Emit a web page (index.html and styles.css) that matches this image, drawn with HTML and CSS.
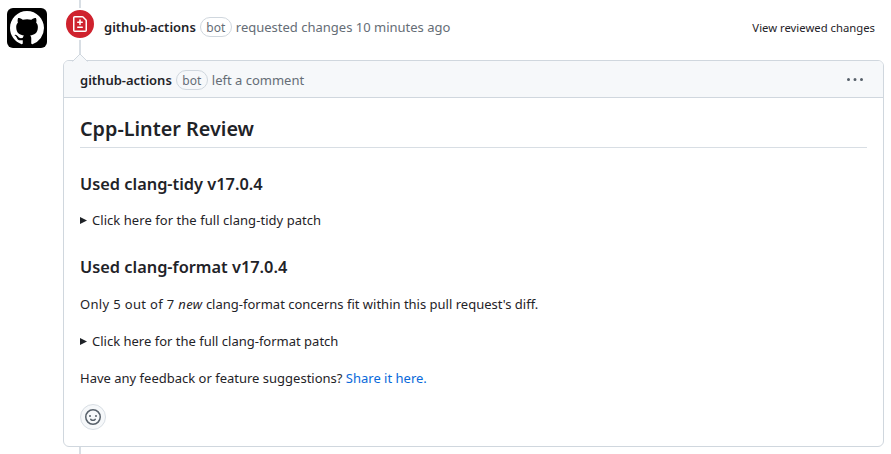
FILE: index.html
```html
<!DOCTYPE html>
<html lang="en">
<head>
<meta charset="utf-8">
<title>Cpp-Linter Review</title>
<link rel="stylesheet" href="styles.css">
</head>
<body>
<main class="timeline">
  <div class="avatar">
    <svg width="34" height="34" viewBox="0 0 16 16" fill="#fff"><path d="M8 0C3.58 0 0 3.58 0 8c0 3.54 2.29 6.53 5.47 7.59.4.07.55-.17.55-.38 0-.19-.01-.82-.01-1.49-2.01.37-2.53-.49-2.69-.94-.09-.23-.48-.94-.82-1.13-.28-.15-.68-.52-.01-.53.63-.01 1.08.58 1.23.82.72 1.21 1.87.87 2.33.66.07-.52.28-.87.51-1.07-1.78-.2-3.64-.89-3.64-3.95 0-.87.31-1.59.82-2.15-.08-.2-.36-1.02.08-2.12 0 0 .67-.21 2.2.82.64-.18 1.32-.27 2-.27s1.36.09 2 .27c1.53-1.04 2.2-.82 2.2-.82.44 1.1.16 1.92.08 2.12.51.56.82 1.27.82 2.15 0 3.07-1.87 3.75-3.65 3.95.29.25.54.73.54 1.48 0 1.07-.01 1.93-.01 2.2 0 .21.15.46.55.38A8.01 8.01 0 0 0 16 8c0-4.42-3.58-8-8-8Z"/></svg>
  </div>
  <div class="thread">
    <header class="event">
      <span class="event-badge">
        <svg width="16" height="16" viewBox="0 0 16 16" fill="#fff"><path d="M1 1.75C1 .784 1.784 0 2.75 0h7.586c.464 0 .909.184 1.237.513l2.914 2.914c.329.328.513.773.513 1.237v9.586A1.75 1.75 0 0 1 13.25 16H2.75A1.75 1.75 0 0 1 1 14.25Zm1.75-.25a.25.25 0 0 0-.25.25v12.5c0 .138.112.25.25.25h10.5a.25.25 0 0 0 .25-.25V4.664a.25.25 0 0 0-.073-.177l-2.914-2.914a.25.25 0 0 0-.177-.073ZM8 3.25a.75.75 0 0 1 .75.75v1.5h1.5a.75.75 0 0 1 0 1.5h-1.5v1.5a.75.75 0 0 1-1.5 0V7h-1.5a.75.75 0 0 1 0-1.5h1.5V4A.75.75 0 0 1 8 3.25Zm-3 8a.75.75 0 0 1 .75-.75h4.5a.75.75 0 0 1 0 1.5h-4.5a.75.75 0 0 1-.75-.75Z"/></svg>
      </span>
      <span class="author">github-actions</span>
      <span class="label">bot</span>
      <span class="muted">requested changes 10 minutes ago</span>
      <span class="view">View reviewed changes</span>
    </header>
    <article class="comment">
      <svg class="caret" width="16" height="9" viewBox="0 0 16 9"><path d="M0 9 8 1l8 8Z" fill="#f6f8fa"/><path d="M.5 8.5 8 1l7.500 7.500" fill="none" stroke="#d0d7de"/></svg>
      <div class="comment-head">
        <span class="author">github-actions</span>
        <span class="label">bot</span>
        <span class="muted">left a comment</span>
        <svg class="kebab" width="16" height="16" viewBox="0 0 16 16" fill="#57606a"><path d="M8 9a1.500 1.500 0 1 0 0-3 1.500 1.500 0 0 0 0 3ZM1.500 9a1.500 1.500 0 1 0 0-3 1.500 1.500 0 0 0 0 3Zm13 0a1.500 1.500 0 1 0 0-3 1.500 1.500 0 0 0 0 3Z"/></svg>
      </div>
      <div class="comment-body">
        <h2>Cpp-Linter Review</h2>
        <h3>Used clang-tidy v17.0.4</h3>
        <p class="summary tidy"><i class="marker"></i><span>Click here for the full clang-tidy patch</span></p>
        <h3>Used clang-format v17.0.4</h3>
        <p><span class="count">Only 5 out of 7 <em>new</em></span> clang-format concerns fit within this pull request's diff.</p>
        <p class="summary"><i class="marker"></i><span>Click here for the full clang-format patch</span></p>
        <p>Have any feedback or feature suggestions? <a>Share it here.</a></p>
        <div class="reaction">
          <svg width="16" height="16" viewBox="0 0 16 16" fill="#57606a"><path d="M8 0a8 8 0 1 1 0 16A8 8 0 0 1 8 0ZM1.500 8a6.500 6.500 0 1 0 13 0 6.500 6.500 0 0 0-13 0Zm3.820 1.636a.75.75 0 0 1 1.038.175l.007.009c.103.118.22.222.35.310.264.178.683.370 1.285.370.602 0 1.020-.192 1.285-.371.130-.088.247-.192.350-.310l.007-.008a.75.75 0 0 1 1.222.870l-.022.030c-.182.248-.422.476-.716.668C9.640 11.716 8.937 12 8 12c-.937 0-1.640-.284-2.126-.621a3.300 3.300 0 0 1-.738-.698l-.012-.018a.75.75 0 0 1 .196-1.027ZM12 7a1 1 0 1 1-2 0 1 1 0 0 1 2 0ZM5 8a1 1 0 1 1 0-2 1 1 0 0 1 0 2Z"/></svg>
        </div>
      </div>
    </article>
  </div>
</main>
</body>
</html>
```
FILE: styles.css
```css
* { box-sizing: border-box; }
body {
  margin: 0;
  background: #fff;
  color: #1f2328;
  font-family: "Noto Sans", "Open Sans", sans-serif;
  font-size: 13px;
  line-height: 21px;
}
.timeline {
  display: flex;
  height: 454px;
  padding-left: 7px;
  overflow: hidden;
}
.avatar {
  display: flex;
  align-items: center;
  justify-content: center;
  width: 40px;
  height: 40px;
  margin: 8px 16px 0 0;
  border-radius: 6px;
  background: #000;
}
.thread {
  width: 821px;
  background: linear-gradient(#d8dee4, #d8dee4) 16px 0 / 2px 100% no-repeat;
}
.event {
  display: flex;
  align-items: center;
  height: 60px;
  padding: 0 9px 6px 1px;
}
.event-badge {
  display: flex;
  align-items: center;
  justify-content: center;
  width: 32px;
  height: 32px;
  margin: -6px 8px 0 0;
  border: 2px solid #fff;
  border-radius: 50%;
  background: #cf222e;
}
.author { font-weight: 600; }
.label {
  width: 32px;
  height: 20px;
  margin: 0 4px;
  border: 1px solid #d0d7de;
  border-radius: 10px;
  color: #656d76;
  font-size: 12px;
  line-height: 19px;
  text-align: center;
}
.muted { color: #656d76; }
.view {
  margin-left: auto;
  font-size: 11.3px;
}
.comment {
  position: relative;
  height: 387px;
  border: 1px solid #d0d7de;
  border-radius: 6px;
  background: #fff;
}
.caret {
  position: absolute;
  top: -8px;
  left: 8px;
}
.comment-head {
  display: flex;
  align-items: center;
  height: 37px;
  padding: 2px 20px 0 16px;
  border-bottom: 1px solid #d0d7de;
  border-radius: 5px 5px 0 0;
  background: #f6f8fa;
}
.kebab { margin-left: auto; }
.comment-body { padding: 16px; }
h2, h3, p { margin: 0; }
h2 {
  height: 34px;
  border-bottom: 1px solid #d8dee4;
  font-size: 19.8px;
  font-weight: 600;
  line-height: 30px;
}
h3 {
  margin: 25px 0 15px;
  font-size: 16.35px;
  font-weight: 600;
  line-height: 22px;
}
p { margin-bottom: 16px; }
h3 + p { margin-top: 15px; }
h3 ~ h3 + p { margin-top: 16px; }
.summary {
  display: flex;
  align-items: center;
}
.tidy { letter-spacing: .05px; }
.marker {
  width: 7px;
  height: 7px;
  margin-right: 5px;
  background: #1f2328;
  clip-path: polygon(0 0, 100% 50%, 0 100%);
}
.count { letter-spacing: .34px; }
a { color: #0969da; }
.reaction {
  display: flex;
  align-items: center;
  justify-content: center;
  width: 26px;
  height: 26px;
  margin-top: -1px;
  border: 1px solid #d8dee4;
  border-radius: 50%;
  background: #f6f8fa;
}
```
